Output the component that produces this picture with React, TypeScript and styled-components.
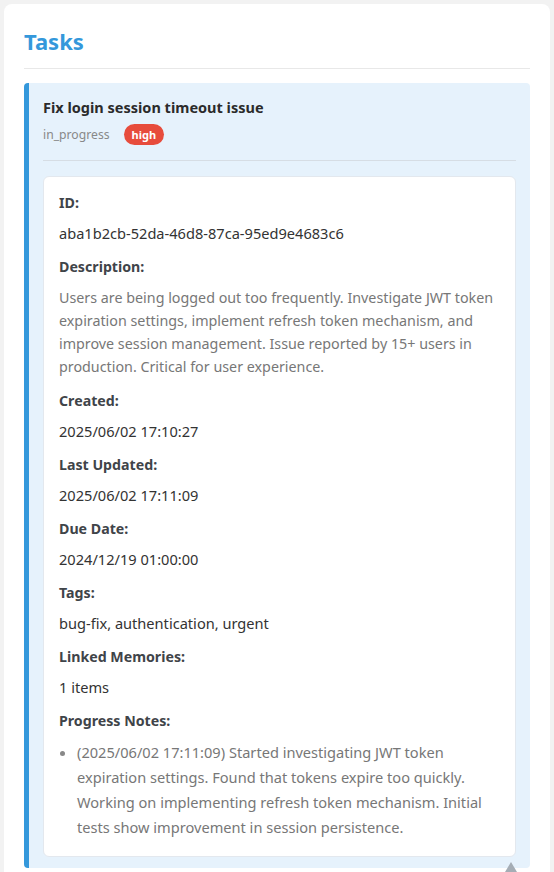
import React from 'react'
import styled, { createGlobalStyle } from 'styled-components'

const GlobalStyle = createGlobalStyle`
    body {
        margin: 0;
        padding: 4px;
        background: #f2f2f2;
        font-family: "Noto Sans", "Open Sans", sans-serif;
        color: #333;
    }
`

const Panel = styled.div`
    background: #fff;
    border-radius: 8px;
    padding: 20px 20px 20px;
    width: 546px;
    box-sizing: border-box;
    min-height: 900px;
    position: relative;
`

const Heading = styled.h2`
    margin: 0;
    padding: 4px 0 14px;
    font-size: 22px;
    line-height: 1.2;
    font-weight: 700;
    color: #3498db;
    border-bottom: 1px solid #e8e8e8;
`

const TaskCard = styled.div`
    margin-top: 14px;
    background: #e6f2fc;
    border-left: 5px solid #3498db;
    border-radius: 4px;
    padding: 14px 14px 11px;
`

const TaskTitle = styled.div`
    font-size: 14.5px;
    font-weight: 700;
    line-height: 21px;
    color: #2b2b2b;
`

const MetaRow = styled.div`
    display: flex;
    align-items: center;
    gap: 14px;
    margin-top: 6px;
    padding-bottom: 15px;
    border-bottom: 1px solid #d6dde4;
`

const Status = styled.span`
    font-size: 12.2px;
    color: #888;
`

const Priority = styled.span<{ $level: string }>`
    background: ${p => (p.$level === 'high' ? '#e74c3c' : p.$level === 'medium' ? '#f39c12' : '#27ae60')};
    color: #fff;
    font-size: 11px;
    font-weight: 700;
    line-height: 15px;
    padding: 3px 8px;
    border-radius: 11px;
`

const Details = styled.div`
    margin-top: 15px;
    background: #fff;
    border: 1px solid #e3e8ee;
    border-radius: 6px;
    padding: 15px 15px 16px;
`

const Field = styled.div`
    & + & {
        margin-top: 12px;
    }
`

const Label = styled.div`
    font-size: 14.2px;
    font-weight: 700;
    line-height: 22px;
    color: #3f4449;
    margin-bottom: 8px;
`

const Value = styled.div<{ $muted?: boolean }>`
    font-size: ${p => (p.$muted ? '14.3px' : '14.6px')};
    line-height: ${p => (p.$muted ? '23px' : '22px')};
    color: ${p => (p.$muted ? '#777' : '#333')};
`

const NoteList = styled.ul`
    margin: 0;
    padding-left: 18px;
    list-style: disc;
`

const Note = styled.li`
    font-size: 14.6px;
    line-height: 25px;
    color: #777;
    &::marker {
        color: #888;
    }
`

const ScrollTop = styled.div`
    position: absolute;
    left: 501px;
    top: 858px;
    width: 0;
    height: 0;
    border-left: 6px solid transparent;
    border-right: 6px solid transparent;
    border-bottom: 10px solid #a5adb5;
`

const task = {
    id: 'aba1b2cb-52da-46d8-87ca-95ed9e4683c6',
    title: 'Fix login session timeout issue',
    status: 'in_progress',
    priority: 'high',
    description:
        'Users are being logged out too frequently. Investigate JWT token expiration settings, implement refresh token mechanism, and improve session management. Issue reported by 15+ users in production. Critical for user experience.',
    created: '2025/06/02 17:10:27',
    updated: '2025/06/02 17:11:09',
    due: '2024/12/19 01:00:00',
    tags: ['bug-fix', 'authentication', 'urgent'],
    memories: 1,
    notes: [
        '(2025/06/02 17:11:09) Started investigating JWT token expiration settings. Found that tokens expire too quickly. Working on implementing refresh token mechanism. Initial tests show improvement in session persistence.',
    ],
}

export default function App() {
    return (
        <>
            <GlobalStyle />
            <Panel>
                <Heading>Tasks</Heading>
                <TaskCard>
                    <TaskTitle>{task.title}</TaskTitle>
                    <MetaRow>
                        <Status>{task.status}</Status>
                        <Priority $level={task.priority}>{task.priority}</Priority>
                    </MetaRow>
                    <Details>
                        <Field>
                            <Label>ID:</Label>
                            <Value>{task.id}</Value>
                        </Field>
                        <Field>
                            <Label>Description:</Label>
                            <Value $muted>{task.description}</Value>
                        </Field>
                        <Field>
                            <Label>Created:</Label>
                            <Value>{task.created}</Value>
                        </Field>
                        <Field>
                            <Label>Last Updated:</Label>
                            <Value>{task.updated}</Value>
                        </Field>
                        <Field>
                            <Label>Due Date:</Label>
                            <Value>{task.due}</Value>
                        </Field>
                        <Field>
                            <Label>Tags:</Label>
                            <Value>{task.tags.join(', ')}</Value>
                        </Field>
                        <Field>
                            <Label>Linked Memories:</Label>
                            <Value>{task.memories} items</Value>
                        </Field>
                        <Field>
                            <Label>Progress Notes:</Label>
                            <NoteList>
                                {task.notes.map((n, i) => (
                                    <Note key={i}>{n}</Note>
                                ))}
                            </NoteList>
                        </Field>
                    </Details>
                </TaskCard>
                <ScrollTop />
            </Panel>
        </>
    )
}
